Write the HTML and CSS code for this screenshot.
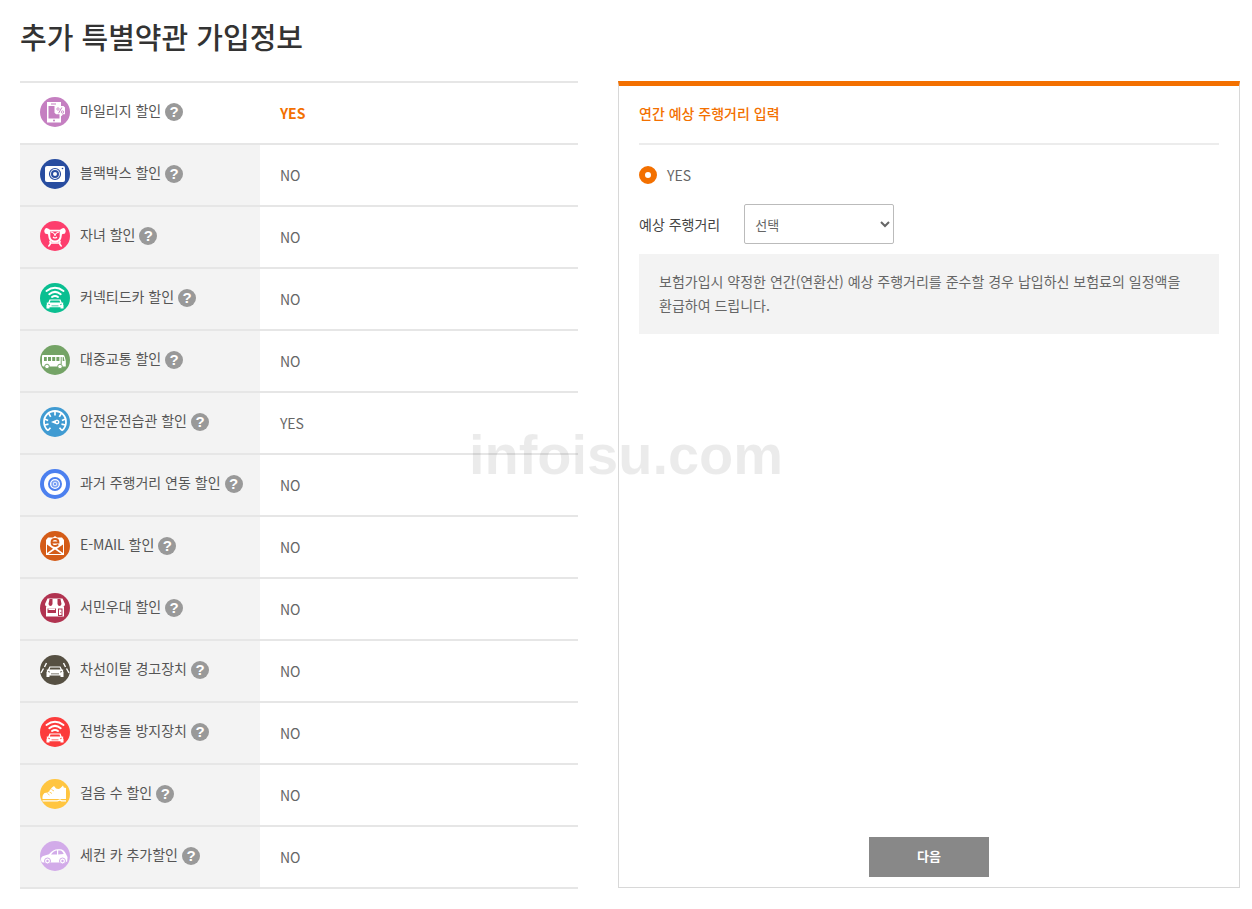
FILE: index.html
```
<!DOCTYPE html>
<html lang="ko">

<head>
  <meta charset="UTF-8" />
  <meta name="viewport" content="width=device-width, initial-scale=1.0" />
  <title>추가 특별약관 가입정보</title>
  <link rel="stylesheet" href="styles.css">
</head>

<body>
  <!-- Shared icon shapes -->
  <svg class="sprite" aria-hidden="true">
    <symbol id="carSignal" viewBox="0 0 30 30">
      <path d="M6.5 8Q15 1.500 23.5 8M9.3 11.200Q15 6.500 20.7 11.200M12 14Q15 11.800 18 14" fill="none" stroke="#fff" stroke-width="2" stroke-linecap="round" />
      <path d="M9.5 16.5h11l1.2 3 1.800.2-.6 1.300.6 1v3.500h-3v-1.300h-11v1.300h-3V22l.6-1-.6-1.300 1.800-.2z" fill="#fff" />
      <path d="M10.500 17.600h9l.7 1.800H9.800zM11.500 22.400h7v.8h-7z" fill="currentColor" />
      <path d="M8.200 21.200l1.800.6M21.800 21.200l-1.800.6" stroke="currentColor" stroke-width=".8" />
    </symbol>
  </svg>

  <main class="page">
    <h1>추가 특별약관 가입정보</h1>

    <div class="content">
      <table class="option-table">
        <tbody>
          <tr class="active">
            <th scope="row">
              <div class="option">
                <svg class="icon" viewBox="0 0 30 30"><circle cx="15" cy="15" r="15" fill="#c57fc1" /><path d="M7 5h14v20.5H7z" fill="#fff" /><path d="M8.500 9h11v12.5h-11zM11 6.600h5v.8h-5z" fill="#c57fc1" /><circle cx="14" cy="23.500" r="1" fill="#c57fc1" /><path d="M14.500 9h9l1.500 1.500v6.700h-2.200l-1.200 2-1.700-2h-3.800l-1.600-1.500z" fill="#fff" /><path d="M21.800 10.500l-3.200 5.700" stroke="#c57fc1" stroke-width="1" /><circle cx="18" cy="12" r="1.200" fill="none" stroke="#c57fc1" stroke-width=".8" /><circle cx="22.500" cy="15" r="1.200" fill="none" stroke="#c57fc1" stroke-width=".8" /></svg>
                <span>마일리지 할인</span>
                <button type="button" class="help" aria-label="마일리지 할인 도움말">?</button>
              </div>
            </th>
            <td>YES</td>
          </tr>
          <tr>
            <th scope="row">
              <div class="option">
                <svg class="icon" viewBox="0 0 30 30"><circle cx="15" cy="15" r="15" fill="#284da0" /><rect x="5" y="7" width="20" height="16" rx="2" fill="#fff" /><circle cx="15" cy="15" r="5.5" fill="none" stroke="#284da0" stroke-width="1.2" /><circle cx="15" cy="15" r="3" fill="none" stroke="#284da0" stroke-width="2" /><circle cx="22.5" cy="9.5" r=".8" fill="#284da0" /></svg>
                <span>블랙박스 할인</span>
                <button type="button" class="help" aria-label="블랙박스 할인 도움말">?</button>
              </div>
            </th>
            <td>NO</td>
          </tr>
          <tr>
            <th scope="row">
              <div class="option">
                <svg class="icon" viewBox="0 0 30 30"><circle cx="15" cy="15" r="15" fill="#fd3e6d" /><path d="M4.200 10Q5 6 8 7.500l2 1.300h10l2-1.300q3-1.500 3.800 2.500l-.8 2.500-3 .8-.7 4q-1.300 4.300-6.300 4.300t-6.300-4.300l-.7-4-3-.8z" fill="#fff" /><path d="M10.300 10.500h9.400v5q-.7 4-4.700 4t-4.700-4z" fill="#fd3e6d" /><path d="M11 11q4 1 4 4 0-3 4-4M13 16q2 2 4 0" fill="none" stroke="#fff" stroke-width="1.100" /><path d="M10 20.500q1.400 2-1.200 4.500M20 20.500q-1.400 2 1.200 4.500M11.500 22h7" fill="none" stroke="#fff" stroke-width="1.600" stroke-linecap="round" /></svg>
                <span>자녀 할인</span>
                <button type="button" class="help" aria-label="자녀 할인 도움말">?</button>
              </div>
            </th>
            <td>NO</td>
          </tr>
          <tr>
            <th scope="row">
              <div class="option">
                <svg class="icon green" viewBox="0 0 30 30"><circle cx="15" cy="15" r="15" fill="currentColor" /><use href="#carSignal" /></svg>
                <span>커넥티드카 할인</span>
                <button type="button" class="help" aria-label="커넥티드카 할인 도움말">?</button>
              </div>
            </th>
            <td>NO</td>
          </tr>
          <tr>
            <th scope="row">
              <div class="option">
                <svg class="icon" viewBox="0 0 30 30"><circle cx="15" cy="15" r="15" fill="#74a366" /><path d="M3 10h20q1.500 0 1.800 2l1 4v5.500H3.500Q2 21.500 2 19.500V11q0-1 1-1z" fill="#fff" /><path d="M4 12h2.800v4H4zM8 12h3v4H8zM12.200 12h3v4h-3zM16.400 12h3v4h-3zM20.700 12h1v7h-1zM22.700 12h1l.8 4h-1.800z" fill="#74a366" /><circle cx="7" cy="21.500" r="2.300" fill="#fff" stroke="#74a366" stroke-width="1" /><circle cx="20" cy="21.500" r="2.300" fill="#fff" stroke="#74a366" stroke-width="1" /></svg>
                <span>대중교통 할인</span>
                <button type="button" class="help" aria-label="대중교통 할인 도움말">?</button>
              </div>
            </th>
            <td>NO</td>
          </tr>
          <tr>
            <th scope="row">
              <div class="option">
                <svg class="icon" viewBox="0 0 30 30"><circle cx="15" cy="15" r="15" fill="#409bd2" /><path d="M8 23.500A11 11 0 1 1 22 23.500" fill="none" stroke="#fff" stroke-width="1.800" /><path d="M15 4v4.500M8.700 6.300l2 3.500M21.300 6.300l-2 3.500M4.500 12l3.600 1.500M25.500 12l-3.600 1.500M4.500 18l4-.8M25.500 18l-4-.8M8 23.500l2.500-2.800M22 23.500l-2.500-2.800" stroke="#fff" stroke-width="1.700" /><path d="M11 15l6-2.500q2.500.5 2.500 2.500T17 17.500z" fill="#fff" /><circle cx="17" cy="15" r="1" fill="#409bd2" /></svg>
                <span>안전운전습관 할인</span>
                <button type="button" class="help" aria-label="안전운전습관 할인 도움말">?</button>
              </div>
            </th>
            <td>YES</td>
          </tr>
          <tr>
            <th scope="row">
              <div class="option">
                <svg class="icon" viewBox="0 0 30 30"><circle cx="15" cy="15" r="15" fill="#4c80ef" /><circle cx="15" cy="15" r="11" fill="#fff" /><circle cx="15" cy="15" r="6" fill="none" stroke="#4c80ef" stroke-width="2" /><circle cx="15" cy="15" r="3" fill="#dbe6fd" stroke="#7da2f4" stroke-width="1.500" /><circle cx="15" cy="15" r="1" fill="#4c80ef" /></svg>
                <span>과거 주행거리 연동 할인</span>
                <button type="button" class="help" aria-label="과거 주행거리 연동 할인 도움말">?</button>
              </div>
            </th>
            <td>NO</td>
          </tr>
          <tr>
            <th scope="row">
              <div class="option">
                <svg class="icon" viewBox="0 0 30 30"><circle cx="15" cy="15" r="15" fill="#d45c18" /><path d="M6 9l2-2.500h5L15 5l2 1.500h5L24 9v15H6z" fill="#fff" /><path d="M7 13.500l6 4.200L7 22zM23 13.500l-6 4.200 6 4.300zM8.500 23l6.500-4.500 6.500 4.500z" fill="#d45c18" /><path d="M11.500 11.500h7q0-3.500-3.500-3.500t-3.500 3.500q0 3.500 3.700 3.500 2 0 3-1.500" fill="none" stroke="#d45c18" stroke-width="1.800" /></svg>
                <span>E-MAIL 할인</span>
                <button type="button" class="help" aria-label="E-MAIL 할인 도움말">?</button>
              </div>
            </th>
            <td>NO</td>
          </tr>
          <tr>
            <th scope="row">
              <div class="option">
                <svg class="icon" viewBox="0 0 30 30"><circle cx="15" cy="15" r="15" fill="#b13350" /><path d="M7.500 5.500h15L25 11q0 2.500-2.500 2.500H24v10H6v-10h1.500Q5 13.500 5 11z" fill="#fff" /><path d="M9.500 6h3v5q-.5 2-2 2t-2-2zM17.500 6h3l1 5q-.5 2-2 2t-2-2zM7.500 15.500h8.500v4.500H7.500zM18 15.500h4.500V23H18z" fill="#b13350" /><path d="M8.500 15.500H15V17H8.500zM19 16.500h2.500v5.500H19zM14.500 6h1v6h-1z" fill="#fff" /><circle cx="20.800" cy="19.500" r=".6" fill="#b13350" /></svg>
                <span>서민우대 할인</span>
                <button type="button" class="help" aria-label="서민우대 할인 도움말">?</button>
              </div>
            </th>
            <td>NO</td>
          </tr>
          <tr>
            <th scope="row">
              <div class="option">
                <svg class="icon" viewBox="0 0 30 30"><circle cx="15" cy="15" r="15" fill="#565043" /><path d="M6.500 8l-2 4M3.500 13.500L1 18M23.500 8l2 4M26.500 13.500L29 18" stroke="#fff" stroke-width="1.400" /><path d="M9.500 11.500h11l1.500 3 1.500.2-.7 1.300.7 1v5h-3v-1.500h-11V22h-3v-5l.7-1-.7-1.300 1.500-.2z" fill="#fff" /><path d="M10.300 12.600h9.400l.8 2H9.500zM11 18.500h8v.8h-8z" fill="#565043" /><path d="M8 16.500l2 .6M22 16.500l-2 .6" stroke="#565043" stroke-width=".8" /></svg>
                <span>차선이탈 경고장치</span>
                <button type="button" class="help" aria-label="차선이탈 경고장치 도움말">?</button>
              </div>
            </th>
            <td>NO</td>
          </tr>
          <tr>
            <th scope="row">
              <div class="option">
                <svg class="icon red" viewBox="0 0 30 30"><circle cx="15" cy="15" r="15" fill="currentColor" /><use href="#carSignal" /></svg>
                <span>전방충돌 방지장치</span>
                <button type="button" class="help" aria-label="전방충돌 방지장치 도움말">?</button>
              </div>
            </th>
            <td>NO</td>
          </tr>
          <tr>
            <th scope="row">
              <div class="option">
                <svg class="icon" viewBox="0 0 30 30"><circle cx="15" cy="15" r="15" fill="#ffc540" /><path d="M2.500 20q-.5-4 2-6l3.500-.5 4-5L14 7l2 2.500q3 1 4.500-.5L23 6.500l.8 2L26 9v11z" fill="#fff" /><path d="M9.500 13l2.500 1.500M11.500 10.500l2.500 1.500M7.500 14.500l2 1.500" stroke="#ffc540" stroke-width=".8" /><path d="M2.500 21.800h15l2.500-.8 1.500.8h4.500" fill="none" stroke="#fff" stroke-width="1.300" /></svg>
                <span>걸음 수 할인</span>
                <button type="button" class="help" aria-label="걸음 수 할인 도움말">?</button>
              </div>
            </th>
            <td>NO</td>
          </tr>
          <tr>
            <th scope="row">
              <div class="option">
                <svg class="icon" viewBox="0 0 30 30"><circle cx="15" cy="15" r="15" fill="#d2abe9" /><path d="M1 18q0-2.500 3-3.300l5-1.500q4-5 9-5h2q4 0 6 4.800l1.500 3-.3 4.500-2.500 1H3q-2 0-2-3.500z" fill="#fff" /><path d="M11 13.500q3-4 6-4v4zM18.200 9.500h2q2 0 3.500 3.500l-5.500.5z" fill="#d2abe9" /><circle cx="7.500" cy="20" r="3" fill="#fff" stroke="#d2abe9" stroke-width="1" /><circle cx="22.500" cy="20" r="3" fill="#fff" stroke="#d2abe9" stroke-width="1" /><circle cx="7.500" cy="20" r="1.200" fill="#d2abe9" /><circle cx="22.500" cy="20" r="1.200" fill="#d2abe9" /></svg>
                <span>세컨 카 추가할인</span>
                <button type="button" class="help" aria-label="세컨 카 추가할인 도움말">?</button>
              </div>
            </th>
            <td>NO</td>
          </tr>
        </tbody>
      </table>

      <!-- Detail panel for the selected option -->
      <form class="panel">
        <h2>연간 예상 주행거리 입력</h2>
        <div class="radio-row">
          <input type="radio" id="mileageYes" name="mileage" checked />
          <label for="mileageYes">YES</label>
        </div>
        <div class="select-row">
          <label for="distance">예상 주행거리</label>
          <select id="distance">
            <option>선택</option>
          </select>
        </div>
        <p class="note">보험가입시 약정한 연간(연환산) 예상 주행거리를 준수할 경우 납입하신 보험료의 일정액을 환급하여 드립니다.</p>
        <button type="button" class="next">다음</button>
      </form>
    </div>
  </main>

  <div class="watermark">infoisu.com</div>
</body>

</html>
```
FILE: styles.css
```
/* General Styles */
* {
  box-sizing: border-box;
}

body {
  margin: 0;
  background: #fff;
  color: #666;
  font-family: "Noto Sans CJK KR", sans-serif;
  font-size: 14px;
  line-height: 24px;
  word-break: keep-all;
}

.sprite {
  display: none;
}

.page {
  padding: 16px 12px 20px 20px;
}

h1 {
  margin: 0 0 25px;
  color: #333;
  font-size: 29px;
  font-weight: 500;
  line-height: 40px;
}

.content {
  display: grid;
  grid-template-columns: 558fr 622fr;
  gap: 40px;
}

/* Option Table */
.option-table {
  width: 100%;
  border-spacing: 0;
  border-top: 2px solid #e6e6e6;
  table-layout: fixed;
}

.option-table th,
.option-table td {
  height: 62px;
  padding: 0 20px 1px;
  border-bottom: 2px solid #e6e6e6;
  text-align: left;
  font-weight: 400;
}

.option-table th {
  width: 43%;
  padding: 0 0 2px 20px;
  background: #f3f3f3;
  color: #555;
}

.option-table .active th {
  background: #fff;
}

.option-table .active td {
  color: #f37000;
  font-weight: 700;
}

.option {
  display: flex;
  align-items: center;
  white-space: nowrap;
}

.option span {
  padding-bottom: 4px;
}

.icon {
  flex: none;
  width: 30px;
  height: 30px;
  margin-right: 10px;
}

.icon.green {
  color: #0abf91;
}

.icon.red {
  color: #fc3c3c;
}

.help {
  width: 18px;
  height: 18px;
  margin-left: 4px;
  padding: 0;
  border: 0;
  border-radius: 50%;
  background: #999;
  color: #fff;
  font: bold 15px/18px "Liberation Sans", sans-serif;
  cursor: pointer;
}

/* Detail Panel */
.panel {
  display: flex;
  flex-direction: column;
  padding: 0 20px 10px;
  border: 1px solid #d8d8d8;
  border-top: 5px solid #f37000;
  margin-bottom: 1px;
}

.panel h2 {
  margin: 0;
  padding: 15px 0 18px;
  border-bottom: 2px solid #ececec;
  color: #f37000;
  font-size: 14px;
  font-weight: 500;
}

.radio-row {
  display: flex;
  align-items: center;
  gap: 10px;
  padding: 18px 0 17px;
}

.radio-row input {
  appearance: none;
  width: 18px;
  height: 18px;
  margin: 0;
  border: 6px solid #f37000;
  border-radius: 50%;
  background: #fff;
}

.select-row {
  display: flex;
  align-items: center;
  gap: 24px;
  color: #444;
}

.select-row select {
  width: 150px;
  height: 40px;
  padding: 0 0 0 6px;
  border: 1px solid #bbb;
  border-radius: 2px;
  background: #fff;
  color: #666;
  font-family: inherit;
  font-size: 13px;
}

.note {
  margin: 10px 0;
  padding: 15px 20px 17px;
  background: #f3f3f3;
}

.next {
  align-self: center;
  width: 120px;
  height: 40px;
  margin-top: auto;
  padding: 0 0 3px;
  border: 0;
  background: #888;
  color: #fff;
  font-family: inherit;
  font-size: 13px;
  font-weight: 700;
  cursor: pointer;
}

/* Watermark */
.watermark {
  position: fixed;
  inset: 0;
  display: flex;
  align-items: center;
  justify-content: center;
  color: rgba(0, 0, 0, 0.08);
  font: bold 56px "Liberation Sans", sans-serif;
  pointer-events: none;
}
```
